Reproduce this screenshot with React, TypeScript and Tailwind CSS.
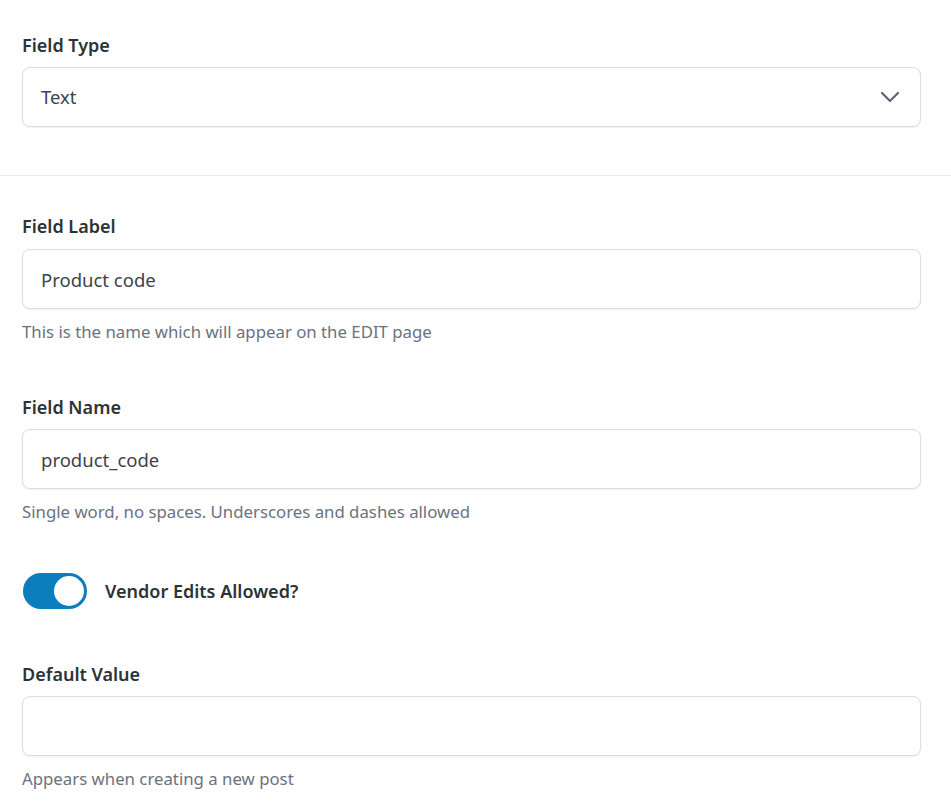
import { useState } from "react";

type FieldProps = {
  label: string;
  value: string;
  help?: string;
  className?: string;
};

function TextField({ label, value, help, className = "" }: FieldProps) {
  const [text, setText] = useState(value);
  return (
    <div className={className}>
      <label className="block h-6 text-[18px] font-semibold leading-6 text-[#2c3338]">{label}</label>
      <input
        value={text}
        onChange={(event) => setText(event.target.value)}
        className="mt-[10px] block h-[60px] w-full rounded-lg border border-[#dcdde5] bg-white px-[18px] text-[18.5px] text-[#3c434a] shadow-[0_1px_2px_rgba(16,24,40,0.06)] outline-none"
      />
      {help ? <p className="mt-[12px] h-[22px] text-[16.8px] leading-[22px] text-[#6b7280]">{help}</p> : null}
    </div>
  );
}

export default function App() {
  const [vendorEdits, setVendorEdits] = useState(true);

  return (
    <div className="min-h-screen bg-white font-['Noto_Sans','Open_Sans',sans-serif]">
      <section className="border-b border-[#ececec] px-[22px] pt-[33px] pb-[48px] pr-[30px]">
        <label className="block h-6 text-[18px] font-semibold leading-6 text-[#2c3338]">Field Type</label>
        <button className="mt-[10px] flex h-[60px] w-full items-center justify-between rounded-lg border border-[#dcdde5] bg-white px-[18px] text-left text-[18.5px] text-[#3c434a] shadow-[0_1px_2px_rgba(16,24,40,0.06)]">
          <span>Text</span>
          <svg width="20" height="12" viewBox="0 0 20 12" fill="none" className="mr-[2px]">
            <path d="M2 2l8 8 8-8" stroke="#5b6478" strokeWidth="2.2" strokeLinecap="round" strokeLinejoin="round" />
          </svg>
        </button>
      </section>

      <div className="px-[22px] pt-[38px] pb-8 pr-[30px]">
        <TextField
          className="[&>input]:mt-[11px]"
          label="Field Label"
          value="Product code"
          help="This is the name which will appear on the EDIT page"
        />
        <TextField
          className="mt-[52px]"
          label="Field Name"
          value="product_code"
          help="Single word, no spaces. Underscores and dashes allowed"
        />

        <div className="mt-[50px] flex items-center gap-[18px] pl-px">
          <button
            onClick={() => setVendorEdits(!vendorEdits)}
            className={`flex h-9 w-[64px] items-center rounded-full p-[3px] transition ${
              vendorEdits ? "justify-end bg-[#0a7dbd]" : "justify-start bg-[#c3c4c7]"
            }`}
          >
            <span className="block h-[30px] w-[30px] rounded-full bg-white" />
          </button>
          <span className="text-[18px] font-semibold text-[#2c3338]">Vendor Edits Allowed?</span>
        </div>

        <TextField className="mt-[53px]" label="Default Value" value="" help="Appears when creating a new post" />
      </div>
    </div>
  );
}
